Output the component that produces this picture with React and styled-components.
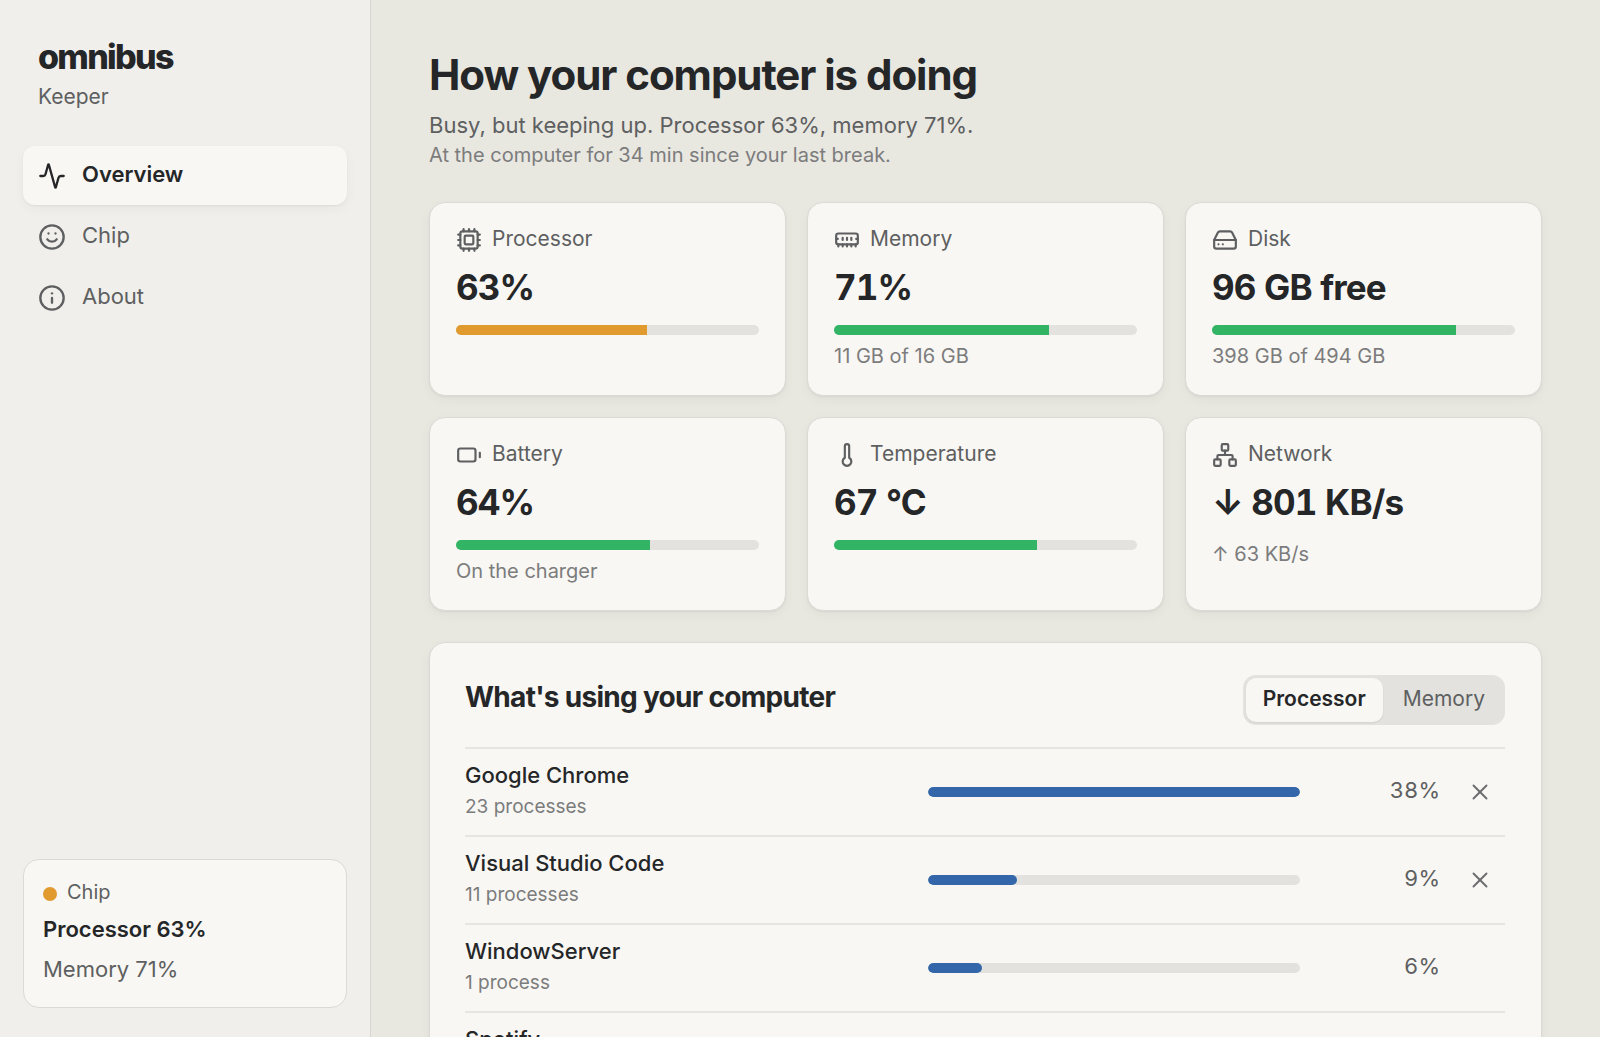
import { useState } from 'react';
import styled, { createGlobalStyle } from 'styled-components';
import {
  Activity,
  Battery,
  Cpu,
  HardDrive,
  Info,
  MemoryStick,
  Network,
  Smile,
  Thermometer,
  X
} from 'lucide-react';

const GlobalStyle = createGlobalStyle`
  * {
    box-sizing: border-box;
  }

  body {
    margin: 0;
    background: #e8e7e0;
    color: #252628;
    font-family: Inter, 'Liberation Sans', sans-serif;
    font-size: 22px;
  }

  h1, h2, p {
    margin: 0;
  }

  button {
    font-family: inherit;
    cursor: pointer;
  }
`;

const Shell = styled.div`
  display: flex;
  height: 100vh;
`;

const Sidebar = styled.aside`
  flex: 0 0 371px;
  display: flex;
  flex-direction: column;
  padding: 37px 23px 29px;
  background: #f0efeb;
  border-right: 1px solid #d9d8d3;
`;

const Brand = styled.div`
  padding: 0 15px;
  margin-bottom: 34px;
`;

const BrandName = styled.div`
  font-size: 34px;
  font-weight: 800;
  line-height: 40px;
  letter-spacing: -0.05em;
`;

const BrandSub = styled.div`
  margin-top: 5px;
  font-size: 21px;
  line-height: 30px;
  color: #5e5f61;
`;

const Nav = styled.nav`
  display: flex;
  flex-direction: column;
  gap: 2px;
`;

const NavButton = styled.button`
  display: flex;
  align-items: center;
  gap: 16px;
  height: 59px;
  padding: 0 15px;
  border: none;
  border-radius: 12px;
  background: ${({ $active }) => ($active ? '#f8f7f3' : 'transparent')};
  box-shadow: ${({ $active }) => ($active ? '0 1px 2px rgba(0, 0, 0, 0.05), 0 4px 12px rgba(0, 0, 0, 0.04)' : 'none')};
  color: ${({ $active }) => ($active ? '#252628' : '#5e5f61')};
  font-size: 22px;
  font-weight: ${({ $active }) => ($active ? 600 : 400)};
  text-align: left;
`;

const Label = styled.span`
  padding-bottom: 4px;
`;

const StatusCard = styled.section`
  margin-top: auto;
  padding: 20px 19px 22px;
  border: 1px solid #dbdad5;
  border-radius: 16px;
  background: #f8f7f3;
`;

const StatusHead = styled.div`
  display: flex;
  align-items: center;
  gap: 10px;
  font-size: 20px;
  line-height: 24px;
  color: #5e5f61;
`;

const Dot = styled.span`
  width: 14px;
  height: 14px;
  border-radius: 50%;
  background: #e19a2d;
`;

const StatusMain = styled.p`
  margin-top: 5px;
  line-height: 32px;
  font-weight: 600;
`;

const StatusSub = styled.p`
  margin-top: 8px;
  line-height: 32px;
  color: #5e5f61;
`;

const Main = styled.main`
  flex: 1;
  min-width: 0;
  padding: 50px 58px;
  overflow-y: auto;
  scrollbar-width: none;
`;

const Title = styled.h1`
  font-size: 42px;
  font-weight: 700;
  line-height: 50px;
  letter-spacing: -0.025em;
`;

const Subtitle = styled.p`
  margin-top: 10px;
  line-height: 30px;
  color: #5e5f61;
`;

const Note = styled.p`
  font-size: 20px;
  line-height: 30px;
  color: #7c7c7d;
`;

const StatGrid = styled.section`
  display: grid;
  grid-template-columns: repeat(3, 1fr);
  gap: 21px;
  margin-top: 32px;
`;

const Card = styled.article`
  border: 1px solid #dbdad5;
  border-radius: 16px;
  background: #f8f7f3;
  box-shadow: 0 1px 2px rgba(0, 0, 0, 0.05), 0 4px 12px rgba(0, 0, 0, 0.04);
`;

const StatCard = styled(Card)`
  padding: 22px 26px 25px;
`;

const StatHead = styled.div`
  display: flex;
  align-items: center;
  gap: 10px;
  height: 30px;
  font-size: 21px;
  color: #5e5f61;
`;

const StatValue = styled.div`
  margin: 10px 0 16px;
  font-size: 35px;
  font-weight: 700;
  line-height: 44px;
  letter-spacing: -0.025em;
  font-variant-numeric: tabular-nums;
`;

const Track = styled.div`
  height: 10px;
  border-radius: 5px;
  background: #e3e2de;
  overflow: hidden;
`;

const Fill = styled.div`
  height: 100%;
  border-radius: ${({ $round }) => ($round ? '5px' : '0')};
  background: ${({ $color }) => $color};
`;

const StatMeta = styled.div`
  font-size: 20px;
  line-height: 28px;
  color: #7c7c7d;

  ${Track} + & {
    margin-top: 7px;
  }
`;

const Panel = styled(Card)`
  margin-top: 31px;
  padding: 32px 36px 32px 35px;
`;

const PanelHead = styled.div`
  display: flex;
  align-items: center;
  justify-content: space-between;
  margin-bottom: 22px;
`;

const PanelTitle = styled.h2`
  padding-bottom: 6px;
  font-size: 28px;
  font-weight: 700;
  line-height: 36px;
  letter-spacing: -0.025em;
`;

const Segmented = styled.div`
  display: flex;
  gap: 3px;
  padding: 3px;
  border-radius: 13px;
  background: #e3e2de;
`;

const Segment = styled.button`
  height: 44px;
  padding: 0 17px 4px;
  border: none;
  border-radius: 10px;
  background: ${({ $active }) => ($active ? '#f8f7f3' : 'transparent')};
  box-shadow: ${({ $active }) => ($active ? '0 1px 2px rgba(0, 0, 0, 0.08)' : 'none')};
  color: ${({ $active }) => ($active ? '#252628' : '#5e5f61')};
  font-size: 21px;
  font-weight: ${({ $active }) => ($active ? 600 : 400)};
`;

const ProcessTable = styled.table`
  display: block;
`;

const ProcessBody = styled.tbody`
  display: block;
`;

const ProcessRow = styled.tr`
  display: grid;
  grid-template-columns: 1.2fr 1fr 124px 49px;
  column-gap: 16px;
  align-items: center;
  height: 88px;
  border-top: 2px solid #e6e5e1;
`;

const ProcessCell = styled.td`
  padding: 0;
`;

const ProcessName = styled.th`
  align-self: start;
  padding: 11px 0 0;
  font-weight: 500;
  line-height: 30px;
  text-align: left;
`;

const ProcessCount = styled.div`
  margin-top: 2px;
  font-size: 19px;
  font-weight: 400;
  color: #7c7c7d;
`;

const ProcessUsage = styled(ProcessCell)`
  padding-bottom: 4px;
  color: #5e5f61;
  font-variant-numeric: tabular-nums;
  text-align: right;
`;

const QuitButton = styled.button`
  display: grid;
  place-items: center;
  width: 100%;
  height: 44px;
  padding: 0;
  border: none;
  background: transparent;
  color: #6b6c6e;
`;

const GREEN = '#32b465';
const AMBER = '#e19a2d';
const BLUE = '#3467a9';

const pages = [
  { name: 'Overview', icon: Activity },
  { name: 'Chip', icon: Smile },
  { name: 'About', icon: Info }
];

const stats = [
  { name: 'Processor', icon: Cpu, value: '63%', level: 63, color: AMBER },
  { name: 'Memory', icon: MemoryStick, value: '71%', level: 71, color: GREEN, meta: '11 GB of 16 GB' },
  { name: 'Disk', icon: HardDrive, value: '96 GB free', level: 80.6, color: GREEN, meta: '398 GB of 494 GB' },
  { name: 'Battery', icon: Battery, value: '64%', level: 64, color: GREEN, meta: 'On the charger' },
  { name: 'Temperature', icon: Thermometer, value: '67 °C', level: 67, color: GREEN },
  { name: 'Network', icon: Network, value: '↓ 801 KB/s', meta: '↑ 63 KB/s' }
];

const processes = [
  { name: 'Google Chrome', count: '23 processes', usage: '38%', share: 100, canQuit: true },
  { name: 'Visual Studio Code', count: '11 processes', usage: '9%', share: 24, canQuit: true },
  { name: 'WindowServer', count: '1 process', usage: '6%', share: 14.6, canQuit: false },
  { name: 'Spotify', share: 8, canQuit: true }
];

const Meter = ({ label, level, color, round }) => (
  <Track role="progressbar" aria-label={label} aria-valuenow={level} aria-valuemin={0} aria-valuemax={100}>
    <Fill $color={color} $round={round} style={{ width: `${level}%` }} />
  </Track>
);

const App = () => {
  const [page, setPage] = useState('Overview');
  const [sortBy, setSortBy] = useState('Processor');

  return (
    <>
      <GlobalStyle />
      <Shell>
        <Sidebar>
          <Brand>
            <BrandName>omnibus</BrandName>
            <BrandSub>Keeper</BrandSub>
          </Brand>
          <Nav>
            {pages.map(({ name, icon: Icon }) => (
              <NavButton key={name} type="button" $active={page === name} onClick={() => setPage(name)}>
                <Icon size={28} strokeWidth={2} />
                <Label>{name}</Label>
              </NavButton>
            ))}
          </Nav>
          <StatusCard>
            <StatusHead>
              <Dot />
              <Label>Chip</Label>
            </StatusHead>
            <StatusMain>Processor 63%</StatusMain>
            <StatusSub>Memory 71%</StatusSub>
          </StatusCard>
        </Sidebar>

        <Main>
          <Title>How your computer is doing</Title>
          <Subtitle>Busy, but keeping up. Processor 63%, memory 71%.</Subtitle>
          <Note>At the computer for 34 min since your last break.</Note>

          <StatGrid>
            {stats.map(({ name, icon: Icon, value, level, color, meta }) => (
              <StatCard key={name}>
                <StatHead>
                  <Icon size={26} strokeWidth={2} />
                  <Label>{name}</Label>
                </StatHead>
                <StatValue>{value}</StatValue>
                {level && <Meter label={name} level={level} color={color} />}
                {meta && <StatMeta>{meta}</StatMeta>}
              </StatCard>
            ))}
          </StatGrid>

          <Panel as="section">
            <PanelHead>
              <PanelTitle>What's using your computer</PanelTitle>
              <Segmented>
                {['Processor', 'Memory'].map((name) => (
                  <Segment
                    key={name}
                    type="button"
                    aria-pressed={sortBy === name}
                    $active={sortBy === name}
                    onClick={() => setSortBy(name)}
                  >
                    {name}
                  </Segment>
                ))}
              </Segmented>
            </PanelHead>
            <ProcessTable>
              <ProcessBody>
                {processes.map(({ name, count, usage, share, canQuit }) => (
                  <ProcessRow key={name}>
                    <ProcessName scope="row">
                      {name}
                      {count && <ProcessCount>{count}</ProcessCount>}
                    </ProcessName>
                    <ProcessCell>
                      <Meter label={name} level={share} color={BLUE} round />
                    </ProcessCell>
                    <ProcessUsage>{usage}</ProcessUsage>
                    <ProcessCell>
                      {canQuit && (
                        <QuitButton type="button" aria-label={`Quit ${name}`}>
                          <X size={26} strokeWidth={1.75} />
                        </QuitButton>
                      )}
                    </ProcessCell>
                  </ProcessRow>
                ))}
              </ProcessBody>
            </ProcessTable>
          </Panel>
        </Main>
      </Shell>
    </>
  );
};

export default App;
